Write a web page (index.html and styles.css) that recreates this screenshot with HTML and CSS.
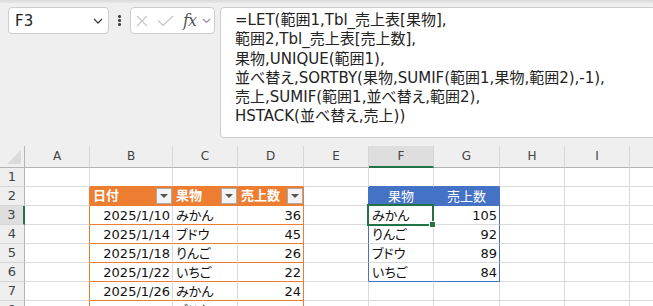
FILE: index.html
```html
<!DOCTYPE html>
<html lang="ja">
   <head>
      <title>LET spill sheet</title>
      <link rel="stylesheet" href="styles.css">
   </head>
   <body>
      <div class="chrome"></div>

      <div class="bar">
      	<div class="namebox">
      		<span>F3</span>
      		<svg width="10" height="6" viewBox="0 0 10 6"><path d="M1 1l4 4 4-4" fill="none" stroke="#444" stroke-width="1.3"/></svg>
      	</div>

      	<div class="dots"><i></i><i></i><i></i></div>

      	<div class="fxbox">
      		<svg class="ico-x" width="12" height="12" viewBox="0 0 12 12"><path d="M1 1l10 10M11 1L1 11" stroke="#c6c6c6" stroke-width="1.2" fill="none"/></svg>
      		<svg class="ico-ok" width="17" height="11" viewBox="0 0 17 11"><path d="M1 5.5l5 5L16 1" stroke="#c6c6c6" stroke-width="1.2" fill="none"/></svg>
      		<span class="fx">fx</span>
      		<svg class="ico-dd" width="9" height="6" viewBox="0 0 9 6"><path d="M1 1l3.5 3.5L8 1" fill="none" stroke="#9d8fa6" stroke-width="1.2"/></svg>
      	</div>

      	<div class="formula">
      		<div>=LET(範囲1,Tbl_売上表[果物],</div>
      		<div>範囲2,Tbl_売上表[売上数],</div>
      		<div>果物,UNIQUE(範囲1),</div>
      		<div>並べ替え,SORTBY(果物,SUMIF(範囲1,果物,範囲2),-1),</div>
      		<div>売上,SUMIF(範囲1,並べ替え,範囲2),</div>
      		<div>HSTACK(並べ替え,売上))</div>
      	</div>
      </div>

      <div class="sheet">
      	<!-- column headers -->
      	<div class="corner"><svg width="14" height="14" viewBox="0 0 14 14"><path d="M14 0V14H0Z" fill="#dadada"/></svg></div>
      	<div class="h">A</div>
      	<div class="h">B</div>
      	<div class="h">C</div>
      	<div class="h">D</div>
      	<div class="h">E</div>
      	<div class="h on">F</div>
      	<div class="h">G</div>
      	<div class="h">H</div>
      	<div class="h">I</div>
      	<div class="h">J</div>

      	<!-- 1 -->
      	<div class="r">1</div>
      	<div class="c"></div>
      	<div class="c bo"></div>
      	<div class="c bo"></div>
      	<div class="c bo"></div>
      	<div class="c"></div>
      	<div class="c bb"></div>
      	<div class="c bb"></div>
      	<div class="c"></div>
      	<div class="c"></div>
      	<div class="c"></div>

      	<!-- 2 -->
      	<div class="r">2</div>
      	<div class="c ro"></div>
      	<div class="c th-o"><span>日付</span><b class="flt"></b></div>
      	<div class="c th-o"><span>果物</span><b class="flt"></b></div>
      	<div class="c th-o"><span>売上数</span><b class="flt"></b></div>
      	<div class="c rb"></div>
      	<div class="c th-b">果物</div>
      	<div class="c th-b">売上数</div>
      	<div class="c"></div>
      	<div class="c"></div>
      	<div class="c"></div>

      	<!-- 3 -->
      	<div class="r on">3</div>
      	<div class="c ro"></div>
      	<div class="c bo n">2025/1/10</div>
      	<div class="c bo">みかん</div>
      	<div class="c bo ro n">36</div>
      	<div class="c rb"></div>
      	<div class="c cur">みかん<span class="sel"><i></i></span></div>
      	<div class="c rb n">105</div>
      	<div class="c"></div>
      	<div class="c"></div>
      	<div class="c"></div>

      	<!-- 4 -->
      	<div class="r">4</div>
      	<div class="c ro"></div>
      	<div class="c bo n">2025/1/14</div>
      	<div class="c bo">ブドウ</div>
      	<div class="c bo ro n">45</div>
      	<div class="c rb"></div>
      	<div class="c">りんご</div>
      	<div class="c rb n">92</div>
      	<div class="c"></div>
      	<div class="c"></div>
      	<div class="c"></div>

      	<!-- 5 -->
      	<div class="r">5</div>
      	<div class="c ro"></div>
      	<div class="c bo n">2025/1/18</div>
      	<div class="c bo">りんご</div>
      	<div class="c bo ro n">26</div>
      	<div class="c rb"></div>
      	<div class="c">ブドウ</div>
      	<div class="c rb n">89</div>
      	<div class="c"></div>
      	<div class="c"></div>
      	<div class="c"></div>

      	<!-- 6 -->
      	<div class="r">6</div>
      	<div class="c ro"></div>
      	<div class="c bo n">2025/1/22</div>
      	<div class="c bo">いちご</div>
      	<div class="c bo ro n">22</div>
      	<div class="c rb"></div>
      	<div class="c bb">いちご</div>
      	<div class="c rb bb n">84</div>
      	<div class="c"></div>
      	<div class="c"></div>
      	<div class="c"></div>

      	<!-- 7 -->
      	<div class="r">7</div>
      	<div class="c ro"></div>
      	<div class="c bo n">2025/1/26</div>
      	<div class="c bo">みかん</div>
      	<div class="c bo ro n">24</div>
      	<div class="c"></div>
      	<div class="c"></div>
      	<div class="c"></div>
      	<div class="c"></div>
      	<div class="c"></div>
      	<div class="c"></div>

      	<!-- 8 -->
      	<div class="r">8</div>
      	<div class="c ro"></div>
      	<div class="c bo n">2025/1/30</div>
      	<div class="c bo">ブドウ</div>
      	<div class="c bo ro n">41</div>
      	<div class="c"></div>
      	<div class="c"></div>
      	<div class="c"></div>
      	<div class="c"></div>
      	<div class="c"></div>
      	<div class="c"></div>
      </div>
   </body>
</html>
```

FILE: styles.css
```css
body{
	margin:0;
	width:653px;
	height:306px;
	overflow:hidden;
	background:#efefef;
	font-family:"DejaVu Sans","Noto Sans CJK JP",sans-serif;
	color:#1a1a1a;
}
.chrome{
	height:3px;
	background:linear-gradient(#dadada,#e8e8e8);
}

/* formula bar */
.bar{
	display:flex;
	align-items:flex-start;
	padding:4px 0 0 8px;
	height:131px;
}
.namebox,
.fxbox,
.formula{
	box-sizing:border-box;
	background:#fff;
	border:1px solid #cdcdcd;
	border-radius:4px;
}
.namebox{
	width:101px;
	height:27px;
	display:flex;
	align-items:center;
	justify-content:space-between;
	padding:0 5px 0 6px;
	font-size:15px;
	color:#222;
}
.dots{
	width:21px;
	height:27px;
	display:flex;
	flex-direction:column;
	align-items:center;
	justify-content:center;
	gap:1.5px;
}
.dots i{
	width:2.5px;
	height:2.5px;
	border-radius:50%;
	background:#444;
}
.fxbox{
	width:85px;
	height:27px;
	display:flex;
	align-items:center;
	padding-left:5px;
}
.ico-ok{
	margin-left:9px;
}
.fx{
	margin-left:9px;
	font-family:"DejaVu Serif",serif;
	font-style:italic;
	font-size:16px;
	color:#555;
	letter-spacing:-1px;
}
.ico-dd{
	margin-left:6px;
}
.formula{
	flex:1;
	margin-left:5px;
	margin-right:-12px;
	height:131px;
	padding:3px 0 0 14px;
	font-size:15px;
	line-height:19.3px;
	color:#222;
	white-space:nowrap;
	font-feature-settings:"palt";
}
.formula div{
	height:19.3px;
}

/* grid */
.sheet{
	margin-top:8px;
	display:grid;
	grid-template-columns:25px 65px 83px 65px 66px 65px 65px 66px 65px 65px 65px;
	grid-template-rows:22px repeat(8,19px);
	width:695px;
}
.corner,
.h,
.r{
	box-sizing:border-box;
	background:#efefef;
	color:#444;
}
.corner{
	border-right:1px solid #b4b4b4;
	border-bottom:1px solid #b4b4b4;
	display:flex;
	align-items:flex-end;
	justify-content:flex-end;
	padding:0 3px 3px 0;
}
.h{
	border-right:1px solid #d6d6d6;
	border-bottom:1px solid #b4b4b4;
	font-size:12px;
	text-align:center;
	line-height:21px;
}
.h.on{
	background:#dedede;
	border-bottom:2px solid #217346;
}
.r{
	border-right:1px solid #b4b4b4;
	border-bottom:1px solid #d6d6d6;
	font-size:13px;
	text-align:center;
	line-height:18px;
}
.r.on{
	background:#dedede;
	border-right:2px solid #217346;
}
.c{
	box-sizing:border-box;
	background:#fff;
	border-right:1px solid #dadada;
	border-bottom:1px solid #dadada;
	padding:1px 2px 0 3px;
	font-size:13px;
	line-height:18px;
	white-space:nowrap;
	overflow:hidden;
	font-feature-settings:"palt";
	color:#111;
}
.n{
	text-align:right;
}
.ro{ border-right-color:#ed7d31; }
.bo{ border-bottom-color:#ed7d31; }
.rb{ border-right-color:#4472c4; }
.bb{ border-bottom-color:#4472c4; }

.th-o{
	background:#ed7d31;
	border-right-color:#ed7d31;
	border-bottom-color:#ed7d31;
	color:#fff;
	font-weight:bold;
	display:flex;
	align-items:center;
	justify-content:space-between;
	padding:0 0 0 3px;
}
.flt{
	box-sizing:border-box;
	width:16px;
	height:16px;
	background:#f3f3f3;
	border:1px solid #a9a9a9;
	display:flex;
	align-items:center;
	justify-content:center;
}
.flt:after{
	content:'';
	border-left:4px solid transparent;
	border-right:4px solid transparent;
	border-top:4px solid #555;
}
.th-b{
	background:#4472c4;
	border-right-color:#4472c4;
	border-bottom-color:#4472c4;
	color:#fff;
	text-align:center;
	padding:1px 0 0 0;
}

/* active cell */
.cur{
	position:relative;
	overflow:visible;
}
.sel{
	position:absolute;
	left:-2px;
	top:-2px;
	width:67px;
	height:22px;
	box-sizing:border-box;
	border:2px solid #217346;
}
.sel i{
	position:absolute;
	right:-4px;
	bottom:-4px;
	width:5px;
	height:5px;
	background:#217346;
	border:1px solid #fff;
}
```
